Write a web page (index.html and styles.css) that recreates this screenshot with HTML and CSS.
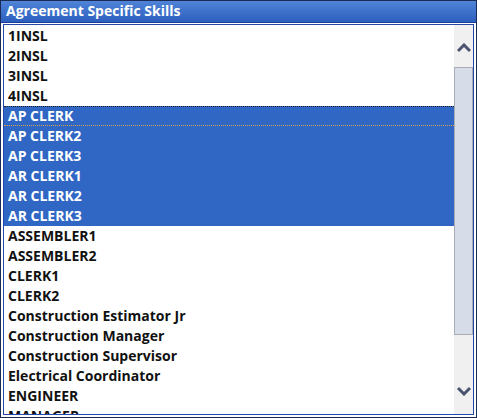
FILE: index.html
```html
<!DOCTYPE html>
<html>
<head>
  <title>Agreement Specific Skills</title>
  <link rel="stylesheet" href="styles.css">
</head>
<body>
  <div class="panel">
    <div class="panel-title">Agreement Specific Skills</div>
    <div class="list-box">
      <div class="list-items">
        <div class="item">1INSL</div>
        <div class="item">2INSL</div>
        <div class="item">3INSL</div>
        <div class="item">4INSL</div>
        <div class="item selected focused">AP CLERK</div>
        <div class="item selected">AP CLERK2</div>
        <div class="item selected">AP CLERK3</div>
        <div class="item selected">AR CLERK1</div>
        <div class="item selected">AR CLERK2</div>
        <div class="item selected">AR CLERK3</div>
        <div class="item">ASSEMBLER1</div>
        <div class="item">ASSEMBLER2</div>
        <div class="item">CLERK1</div>
        <div class="item">CLERK2</div>
        <div class="item">Construction Estimator Jr</div>
        <div class="item">Construction Manager</div>
        <div class="item">Construction Supervisor</div>
        <div class="item">Electrical Coordinator</div>
        <div class="item">ENGINEER</div>
        <div class="item">MANAGER</div>
      </div>
      <div class="scrollbar">
        <div class="scroll-btn">
          <svg width="14" height="10" viewBox="0 0 14 10"><path d="M1 8 L7 2 L13 8" fill="none" stroke="#4a5470" stroke-width="3"/></svg>
        </div>
        <div class="scroll-track">
          <div class="scroll-thumb"></div>
        </div>
        <div class="scroll-btn">
          <svg width="14" height="10" viewBox="0 0 14 10"><path d="M1 2 L7 8 L13 2" fill="none" stroke="#4a5470" stroke-width="3"/></svg>
        </div>
      </div>
    </div>
  </div>
</body>
</html>
```
FILE: styles.css
```css
body {
  margin: 0;
  font-family: "Open Sans", Arial, sans-serif;
}

.panel {
  width: 477px;
  height: 418px;
  box-sizing: border-box;
  border: 1px solid #1c2b55;
  background-color: #fff;
  display: flex;
  flex-direction: column;
}

.panel-title {
  height: 21px;
  padding-left: 5px;
  background: linear-gradient(#4f84d8, #2d5fbd);
  border-bottom: 1px solid #1a3c9c;
  color: #fff;
  font-size: 14px;
  font-weight: bold;
  line-height: 20px;
}

.list-box {
  flex: 1;
  margin: 1px 2px 2px 2px;
  border: 1px solid #2447a8;
  display: flex;
  overflow: hidden;
}

.list-items {
  flex: 1;
  padding-top: 1px;
  overflow: hidden;
}

.item {
  height: 20px;
  line-height: 20px;
  padding-left: 4px;
  font-size: 14px;
  font-weight: bold;
  color: #111;
  white-space: nowrap;
}

.item.selected {
  background-color: #3167c4;
  color: #fff;
}

.item.focused {
  box-sizing: border-box;
  line-height: 18px;
  border-top: 1px dotted #222;
  border-bottom: 1px dotted #d9a24a;
}

.scrollbar {
  width: 19px;
  background-color: #f0f0f0;
  display: flex;
  flex-direction: column;
}

.scroll-btn {
  height: 42px;
  padding-top: 4px;
  box-sizing: border-box;
  display: flex;
  align-items: center;
  justify-content: center;
}

.scroll-btn:last-child {
  padding-top: 0;
  padding-bottom: 4px;
}

.scroll-track {
  flex: 1;
}

.scroll-thumb {
  height: 268px;
  background-color: #d6dde8;
  border: 1px solid #a8acb4;
  box-sizing: border-box;
}
```
